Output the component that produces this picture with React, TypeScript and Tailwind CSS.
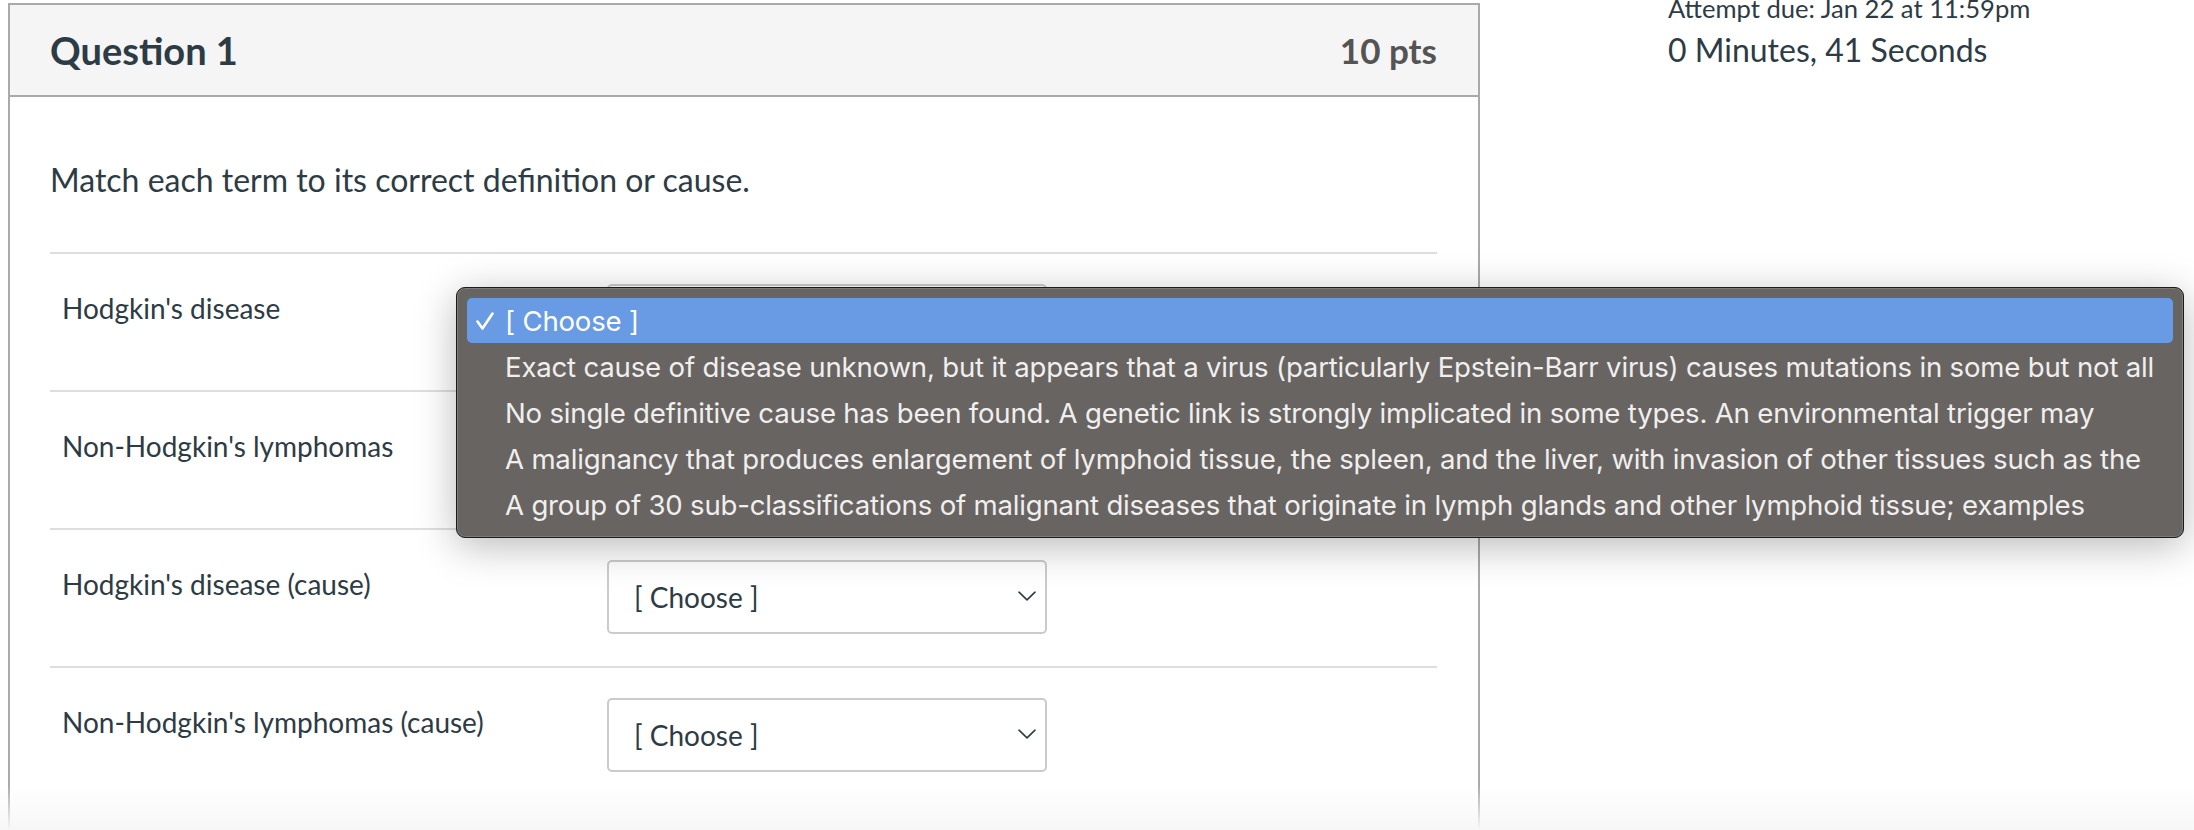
const rows = [
  "Hodgkin's disease",
  "Non-Hodgkin's lymphomas",
  "Hodgkin's disease (cause)",
  "Non-Hodgkin's lymphomas (cause)",
];

const options = [
  "Exact cause of disease unknown, but it appears that a virus (particularly Epstein-Barr virus) causes mutations in some but not all",
  "No single definitive cause has been found. A genetic link is strongly implicated in some types. An environmental trigger may",
  "A malignancy that produces enlargement of lymphoid tissue, the spleen, and the liver, with invasion of other tissues such as the",
  "A group of 30 sub-classifications of malignant diseases that originate in lymph glands and other lymphoid tissue; examples",
];

function ChooseSelect() {
  return (
    <div className="flex h-[74px] w-[440px] items-center justify-between rounded-[5px] border-2 border-[#cbcbcb] bg-white pl-[25px] pr-[9px]">
      <span className="text-[28px] text-[#2d3b45]">[ Choose ]</span>
      <svg width="18" height="10" viewBox="0 0 18 10" fill="none" className="mt-[-2px]">
        <path d="M1 1.2L9 8.8L17 1.2" stroke="#2d3b45" strokeWidth="1.6" strokeLinecap="round" strokeLinejoin="round" />
      </svg>
    </div>
  );
}

function MatchRow({ label }: { label: string }) {
  return (
    <div className="flex items-start border-t-2 border-[#dedede] pb-[32px] pt-[30px]">
      <div className="w-[557px] pl-[12px] pt-[4px] text-[28px] leading-[40px] text-[#2d3b45]">{label}</div>
      <ChooseSelect />
    </div>
  );
}

function OptionsMenu() {
  return (
    <div className="absolute left-[456px] top-[287px] h-[251px] w-[1728px] rounded-[9px] border border-[#1c1c1c] bg-[#686462] px-[10px] py-[10px] font-['Inter',sans-serif] text-[27.6px] tracking-[-0.2px] text-[#f0efee] shadow-[0_8px_40px_rgba(0,0,0,0.28)] ring-1 ring-inset ring-[#7d7a78]">
      <div className="flex h-[45px] items-center rounded-[5px] bg-[#689be3] pl-[8px] pt-[3px] text-white">
        <svg width="20" height="20" viewBox="0 0 20 20" fill="none" className="mr-[10px] mt-[-2px]">
          <path d="M2.5 10.5L7.5 17.5L17.5 2.5" stroke="white" strokeWidth="2.6" strokeLinecap="round" strokeLinejoin="round" />
        </svg>
        <span>[ Choose ]</span>
      </div>
      {options.map((text) => (
        <div key={text} className="flex h-[46px] items-center whitespace-nowrap pl-[38px] pt-[4px]">
          {text}
        </div>
      ))}
    </div>
  );
}

export default function App() {
  return (
    <div className="relative h-[830px] w-[2194px] overflow-hidden bg-white font-['Lato',sans-serif]">
      <div className="flex items-start">
        <section className="ml-[8px] mt-[3px] w-[1472px] border-2 border-b-0 border-[#aaaaaa]">
          <header className="flex h-[92px] items-center justify-between border-b-2 border-[#aaaaaa] bg-[#f5f5f5] pl-[40px] pr-[41px]">
            <h1 className="text-[38px] font-bold text-[#2d3b45]">Question 1</h1>
            <span className="text-[35px] font-bold text-[#545454]">10 pts</span>
          </header>
          <div className="pb-[80px] pl-[40px] pr-[41px] pt-[60px]">
            <p className="mb-[50px] text-[32px] leading-[45px] text-[#2d3b45]">
              Match each term to its correct definition or cause.
            </p>
            {rows.map((label) => (
              <MatchRow key={label} label={label} />
            ))}
          </div>
        </section>
        <aside className="-mt-[7px] ml-[188px] text-[#2d3b45]">
          <div className="text-[25.6px] leading-[30px]">Attempt due: Jan 22 at 11:59pm</div>
          <div className="mt-[7px] text-[32px] leading-[40px]">0 Minutes, 41 Seconds</div>
        </aside>
      </div>
      <OptionsMenu />
      <div className="pointer-events-none absolute bottom-0 left-0 h-[45px] w-full bg-gradient-to-b from-transparent to-[#f7f7f7]" />
    </div>
  );
}
